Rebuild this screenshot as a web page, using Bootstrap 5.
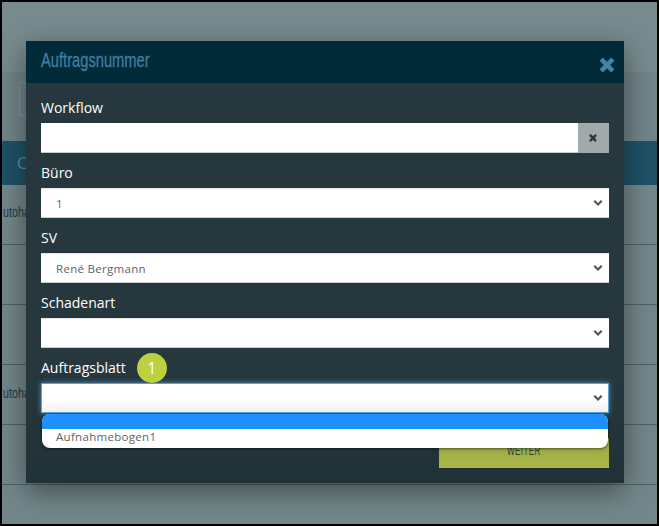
<!DOCTYPE html>
<html lang="de">
<head>
<meta charset="utf-8">
<title>Auftragsnummer</title>
<link href="https://cdn.jsdelivr.net/npm/bootstrap@5.3.0/dist/css/bootstrap.min.css" rel="stylesheet">
<style>
html,body{height:100%;margin:0;overflow:hidden;background:#000}
.page-frame{position:relative;width:655px;height:522px;margin:2px 0 0 2px;background:#73878b;overflow:hidden;font-family:"Open Sans",sans-serif}
.top-band{height:70px;background:#778b8f}
.search-band{height:69px;background:#71858a;padding:10px 0 0 17px}
.search-ghost{width:60px;height:34px;border:1px solid #82949a}
.head-band{height:44px;background:#1f5267;color:#5d8ea3;font-size:16px;padding:11px 0 0 15px;line-height:22px}
.data-row{height:60px;border-bottom:1px solid #4d6165;font-size:15px;color:#26383c;line-height:20px;overflow:hidden;padding-left:1px;font-family:"Liberation Sans",sans-serif}
.data-row.first{padding-top:17px}
.data-row.tall{padding-top:18px}
.ghost-word{display:inline-block;transform:scaleX(.72);transform-origin:left center}
.dlg{position:absolute;left:24px;top:39px;width:598px;height:442px;background:linear-gradient(#26383d 0,#26383d 75%,#203137 100%);border:0;border-radius:0;box-shadow:0 8px 28px rgba(0,0,0,.45);color:#fff}
.dlg-head{height:42px;background:#012a38;padding:0 9px 4px 15px;border:0;border-radius:0}
.dlg-title{font-family:"Liberation Sans",sans-serif;font-size:21px;color:#3f7fa3;margin:0;line-height:38px;transform:scaleX(.7);transform-origin:left center;white-space:nowrap;-webkit-text-stroke:.3px #3f7fa3}
.dlg-x{color:#4083a8;width:16px;height:16px;margin-top:10px}
.dlg-body{padding:15px 15px 0;position:relative}
.fld-label{font-size:14px;font-weight:500;line-height:20px;color:#fff;margin:0 0 5px;height:20px;display:flex;align-items:center}
.fld{margin-bottom:10px}
.fld-ctl{height:30px;border:0;border-bottom:1px solid #c9cdcf;border-top:1px solid #e4e6e7;border-radius:0;font-size:11.5px;letter-spacing:.3px;color:#5c6468;padding:1px 30px 0 15px;background-color:#fff;background-image:url("data:image/svg+xml,%3csvg xmlns='http://www.w3.org/2000/svg' viewBox='0 0 16 12'%3e%3cpath fill='none' stroke='%23505558' stroke-width='3.4' d='m2 2.5 6 6 6-6'/%3e%3c/svg%3e");background-size:10px 8px;background-position:right 6px center;line-height:26px;font-family:"Open Sans",sans-serif}
.fld-ctl:focus{box-shadow:none}
.fld-focus{border:1px solid #5ba0d8;box-shadow:0 0 5px rgba(95,170,235,.75);background-image:url("data:image/svg+xml,%3csvg xmlns='http://www.w3.org/2000/svg' viewBox='0 0 16 12'%3e%3cpath fill='none' stroke='%23505558' stroke-width='3.4' d='m2 2.5 6 6 6-6'/%3e%3c/svg%3e"),linear-gradient(#fff 60%,#f0f0f0);background-size:10px 8px,auto;background-position:right 5px center,0 0;background-repeat:no-repeat}
.wf-input{height:30px;border:0;border-bottom:1px solid #c9cdcf;border-radius:0;background:#fff}
.wf-clear{width:31px;height:30px;background:#a2a9aa;border:0;border-radius:0;padding:0 2px 0 0;display:flex;align-items:center;justify-content:center}
.step-dot{width:30px;height:30px;border-radius:50%;background:#bcd040;color:#fff;font-size:16px;font-weight:400;display:flex;align-items:center;justify-content:center;margin-left:11px}
.go-btn{position:absolute;right:15px;top:355px;width:170px;height:30px;background:linear-gradient(#98a43e,#abb94b);border:0;border-radius:0;padding:0;line-height:26px;color:#2c3c38;display:flex;align-items:flex-start;justify-content:center}
.go-label{display:inline-block;font-family:"Liberation Sans",sans-serif;font-size:12px;letter-spacing:.5px;transform:scaleX(.68)}
.opt-list{position:absolute;left:16px;right:16px;top:331px;height:34px;background:#fff;border-radius:8px;overflow:hidden;box-shadow:0 1px 3px rgba(0,0,0,.5);font-size:11.5px;letter-spacing:.3px;color:#5c6468}
.opt-on{height:15px;background:#1e90ff}
.opt-item{height:19px;padding-left:14px;line-height:16px}
</style>
</head>
<body>
<div class="page-frame">
  <div class="top-band"></div>
  <div class="search-band"><div class="search-ghost"></div></div>
  <div class="head-band">C</div>
  <div class="data-row first"><span class="ghost-word">utoha</span></div>
  <div class="data-row"></div>
  <div class="data-row"></div>
  <div class="data-row tall"><span class="ghost-word">utoha</span></div>
  <div class="data-row"></div>

  <div class="modal-content dlg" role="dialog" aria-label="Auftragsnummer">
    <div class="modal-header dlg-head d-flex justify-content-between">
      <h5 class="modal-title dlg-title">Auftragsnummer</h5>
      <svg class="dlg-x" viewBox="0 0 16 16" aria-hidden="true"><path d="M2.2 2.2 13.8 13.8M13.8 2.2 2.2 13.8" stroke="currentColor" stroke-width="4.6" fill="none"/></svg>
    </div>
    <div class="modal-body dlg-body">
      <div class="fld">
        <label class="fld-label">Workflow</label>
        <div class="input-group">
          <input type="text" class="form-control wf-input">
          <button type="button" class="btn wf-clear" aria-label="Leeren"><svg width="8" height="8" viewBox="0 0 10 10"><path d="M1.2 1.2 8.8 8.8M8.8 1.2 1.2 8.8" stroke="#2e3638" stroke-width="3"/></svg></button>
        </div>
      </div>
      <div class="fld">
        <label class="fld-label">Büro</label>
        <select class="form-select fld-ctl"><option>1</option></select>
      </div>
      <div class="fld">
        <label class="fld-label">SV</label>
        <select class="form-select fld-ctl"><option>René Bergmann</option></select>
      </div>
      <div class="fld">
        <label class="fld-label">Schadenart</label>
        <select class="form-select fld-ctl"><option></option></select>
      </div>
      <div class="fld">
        <label class="fld-label">Auftragsblatt<span class="step-dot">1</span></label>
        <select class="form-select fld-ctl fld-focus"><option></option></select>
      </div>
      <button type="button" class="btn go-btn"><span class="go-label">WEITER</span></button>
      <div class="opt-list">
        <div class="opt-on"></div>
        <div class="opt-item">Aufnahmebogen1</div>
      </div>
    </div>
  </div>
</div>
<script src="https://cdn.jsdelivr.net/npm/bootstrap@5.3.0/dist/js/bootstrap.bundle.min.js"></script>
</body>
</html>
